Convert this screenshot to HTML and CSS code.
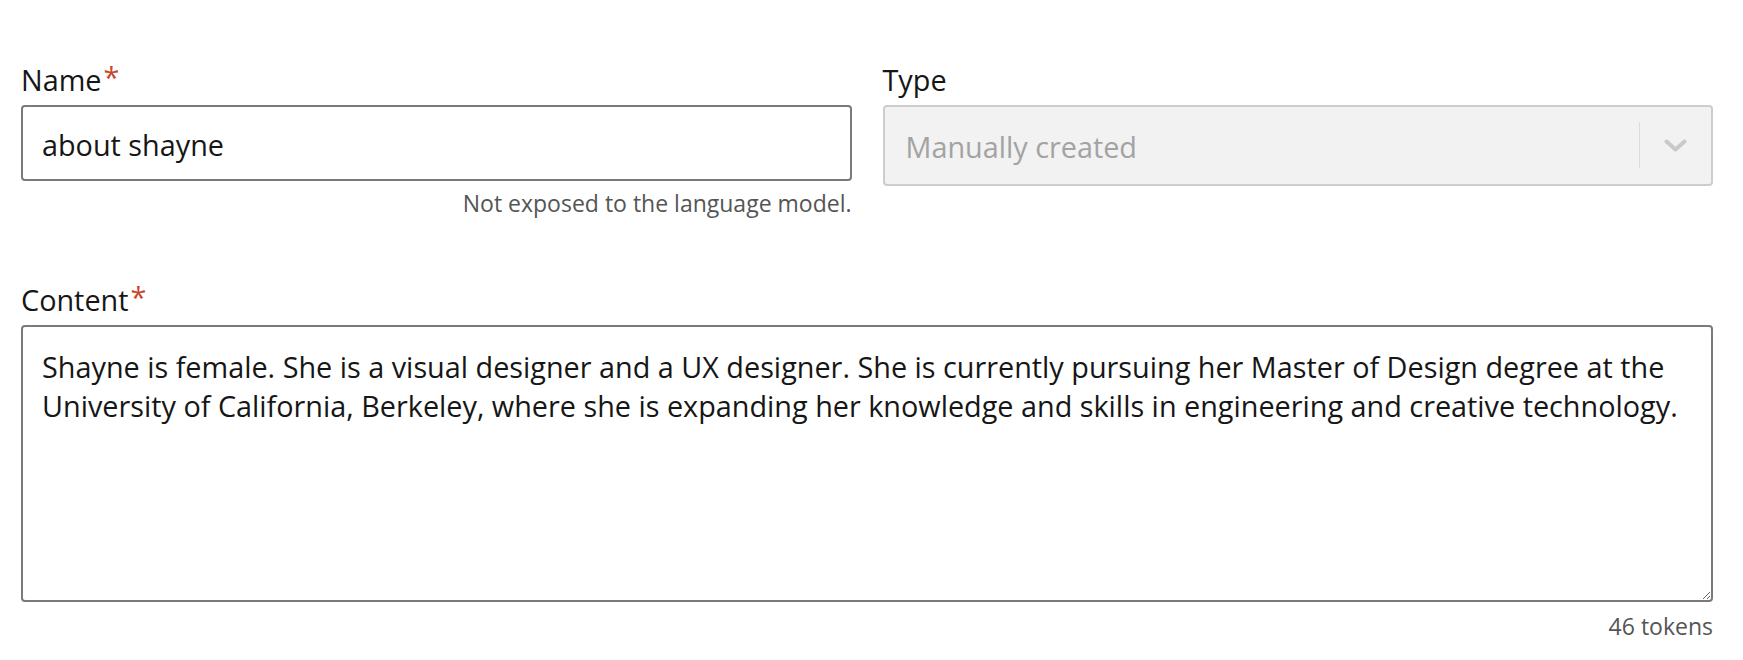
FILE: index.html
```html
<!DOCTYPE html>
<html lang="en">

<head>
    <meta charset="UTF-8">
    <meta name="viewport" content="width=device-width, initial-scale=1.0">
    <title>Edit memory</title>
    <link rel="stylesheet" href="styles.css">
</head>

<body>
    <form class="memory-form">
        <div class="row">
            <div class="field">
                <label for="name">Name<span class="required">*</span></label>
                <input type="text" id="name" name="name" value="about shayne">
                <div class="hint">Not exposed to the language model.</div>
            </div>
            <div class="field">
                <label>Type</label>
                <div class="select is-disabled">
                    <div class="select-value">Manually created</div>
                    <span class="select-separator"></span>
                    <div class="select-indicator">
                        <svg width="23" height="13" viewBox="0 0 23 13">
                            <polyline points="2.5,2.5 11.5,10.5 20.5,2.5" fill="none" stroke="#c9c9c9" stroke-width="4" stroke-linecap="round" stroke-linejoin="round" />
                        </svg>
                    </div>
                </div>
            </div>
        </div>

        <div class="field field-content">
            <label for="content">Content<span class="required">*</span></label>
            <textarea id="content" name="content">Shayne is female. She is a visual designer and a UX designer. She is currently pursuing her Master of Design degree at the University of California, Berkeley, where she is expanding her knowledge and skills in engineering and creative technology.</textarea>
            <div class="hint">46 tokens</div>
        </div>
    </form>
</body>

</html>
```
FILE: styles.css
```css
body {
    margin: 0;
    padding: 0;
    font-family: "Open Sans", sans-serif;
    font-size: 28.8px;
    color: #161616;
    background-color: white;
}

.memory-form {
    padding: 60px 30px 0 21px;
}

.row {
    display: grid;
    grid-template-columns: 1fr 1fr;
    column-gap: 31px;
}

.field {
    display: flex;
    flex-direction: column;
}

label {
    display: block;
    line-height: 39px;
    margin-bottom: 6px;
}

.required {
    color: #c8472c;
    margin-left: 2px;
    line-height: 0;
    vertical-align: 3px;
}

input[type="text"],
textarea {
    font-family: inherit;
    font-size: inherit;
    color: #161616;
    line-height: 39px;
    padding: 18px 19px 15px;
    border: 2px solid #7a7a7a;
    border-radius: 4px;
    background-color: white;
    box-sizing: border-box;
    width: 100%;
    margin: 0;
    outline: none;
}

input[type="text"] {
    height: 76px;
}

.hint {
    align-self: flex-end;
    font-size: 23px;
    color: #555;
    margin-top: 6px;
}

.select {
    display: flex;
    align-items: center;
    height: 81px;
    border: 2px solid #cdcdcd;
    border-radius: 4px;
    background-color: #f2f2f2;
    box-sizing: border-box;
}

.select-value {
    flex: 1;
    padding: 2px 0 0 21px;
    line-height: 39px;
    color: #a3a3a3;
}

.select-separator {
    align-self: stretch;
    width: 1px;
    margin: 15px 0 16px;
    background-color: #dcdcdc;
}

.select-indicator {
    display: flex;
    padding: 0 24px;
}

.field-content {
    margin-top: 61px;
}

.field-content label {
    margin-bottom: 6px;
}

textarea {
    display: block;
    height: 277px;
    padding-top: 20px;
    resize: vertical;
}

.field-content .hint {
    margin-top: 8px;
}
```
